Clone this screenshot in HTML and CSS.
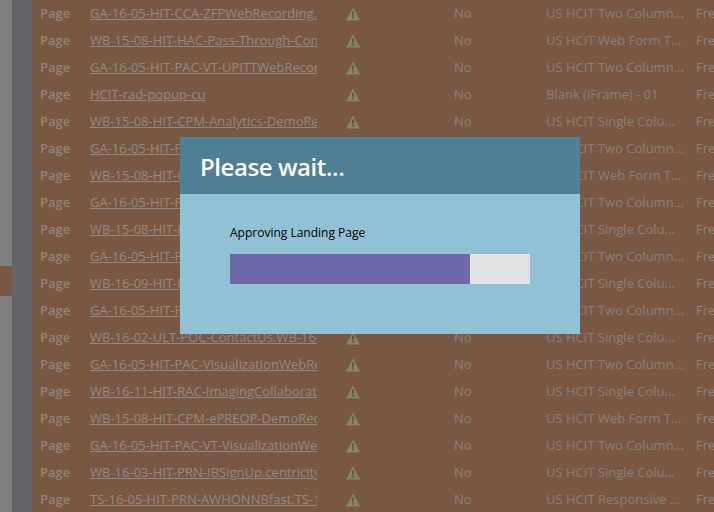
FILE: index.html
```html
<!DOCTYPE html>
<html lang="en">
<head>
<meta charset="utf-8">
<title>Please wait</title>
<link rel="stylesheet" href="styles.css">
</head>
<body>
<svg class="defs" width="0" height="0" aria-hidden="true">
  <symbol id="warn" viewBox="0 0 14 14">
    <path d="M7 .5 14 13.5H0Z" fill="#85865b"/>
    <path d="M6.2 4.4h1.6l-.2 5H6.4Z" fill="#4f4a3a"/>
    <rect x="6.3" y="10.2" width="1.4" height="1.5" fill="#4f4a3a"/>
  </symbol>
</svg>
<div class="app">
  <aside class="tree">
    <div class="tree-selected"></div>
  </aside>
  <div class="divider"></div>
  <main class="table">
    <div class="row"><span class="type">Page</span><a class="name">GA-16-05-HIT-CCA-ZFPWebRecording.com</a><svg class="icon"><use href="#warn"/></svg><span class="flag">No</span><span class="tpl">US HCIT Two Column...</span><span class="last">Free</span></div>
    <div class="row"><span class="type">Page</span><a class="name">WB-15-08-HIT-HAC-Pass-Through-ContactUs</a><svg class="icon"><use href="#warn"/></svg><span class="flag">No</span><span class="tpl">US HCIT Web Form T...</span><span class="last">Free</span></div>
    <div class="row"><span class="type">Page</span><a class="name">GA-16-05-HIT-PAC-VT-UPITTWebRecording</a><svg class="icon"><use href="#warn"/></svg><span class="flag">No</span><span class="tpl">US HCIT Two Column...</span><span class="last">Free</span></div>
    <div class="row"><span class="type">Page</span><a class="name">HCIT-rad-popup-cu</a><svg class="icon"><use href="#warn"/></svg><span class="flag">No</span><span class="tpl">Blank (iFrame) - 01</span><span class="last">Free</span></div>
    <div class="row"><span class="type">Page</span><a class="name">WB-15-08-HIT-CPM-Analytics-DemoRequest</a><svg class="icon"><use href="#warn"/></svg><span class="flag">No</span><span class="tpl">US HCIT Single Colu...</span><span class="last">Free</span></div>
    <div class="row"><span class="type">Page</span><a class="name">GA-16-05-HIT-PAC-WebRecording</a><svg class="icon"><use href="#warn"/></svg><span class="flag">No</span><span class="tpl">US HCIT Two Column...</span><span class="last">Free</span></div>
    <div class="row"><span class="type">Page</span><a class="name">WB-15-08-HIT-CPM-ContactUs</a><svg class="icon"><use href="#warn"/></svg><span class="flag">No</span><span class="tpl">US HCIT Web Form T...</span><span class="last">Free</span></div>
    <div class="row"><span class="type">Page</span><a class="name">GA-16-05-HIT-PAC-WebRecording</a><svg class="icon"><use href="#warn"/></svg><span class="flag">No</span><span class="tpl">US HCIT Two Column...</span><span class="last">Free</span></div>
    <div class="row"><span class="type">Page</span><a class="name">WB-15-08-HIT-RAC-DemoRequest</a><svg class="icon"><use href="#warn"/></svg><span class="flag">No</span><span class="tpl">US HCIT Single Colu...</span><span class="last">Free</span></div>
    <div class="row"><span class="type">Page</span><a class="name">GA-16-05-HIT-PAC-WebRecording</a><svg class="icon"><use href="#warn"/></svg><span class="flag">No</span><span class="tpl">US HCIT Two Column...</span><span class="last">Free</span></div>
    <div class="row"><span class="type">Page</span><a class="name">WB-16-09-HIT-RAC-ContactUs</a><svg class="icon"><use href="#warn"/></svg><span class="flag">No</span><span class="tpl">US HCIT Single Colu...</span><span class="last">Free</span></div>
    <div class="row"><span class="type">Page</span><a class="name">GA-16-05-HIT-PAC-WebRecording</a><svg class="icon"><use href="#warn"/></svg><span class="flag">No</span><span class="tpl">US HCIT Two Column...</span><span class="last">Free</span></div>
    <div class="row"><span class="type">Page</span><a class="name">WB-16-02-ULT-POC-ContactUs.WB-16-02</a><svg class="icon"><use href="#warn"/></svg><span class="flag">No</span><span class="tpl">US HCIT Single Colu...</span><span class="last">Free</span></div>
    <div class="row"><span class="type">Page</span><a class="name">GA-16-05-HIT-PAC-VisualizationWebRecording</a><svg class="icon"><use href="#warn"/></svg><span class="flag">No</span><span class="tpl">US HCIT Two Column...</span><span class="last">Free</span></div>
    <div class="row"><span class="type">Page</span><a class="name">WB-16-11-HIT-RAC-ImagingCollaboration</a><svg class="icon"><use href="#warn"/></svg><span class="flag">No</span><span class="tpl">US HCIT Single Colu...</span><span class="last">Free</span></div>
    <div class="row"><span class="type">Page</span><a class="name">WB-15-08-HIT-CPM-ePREOP-DemoRequest</a><svg class="icon"><use href="#warn"/></svg><span class="flag">No</span><span class="tpl">US HCIT Web Form T...</span><span class="last">Free</span></div>
    <div class="row"><span class="type">Page</span><a class="name">GA-16-05-HIT-PAC-VT-VisualizationWebRecording</a><svg class="icon"><use href="#warn"/></svg><span class="flag">No</span><span class="tpl">US HCIT Two Column...</span><span class="last">Free</span></div>
    <div class="row"><span class="type">Page</span><a class="name">WB-16-03-HIT-PRN-IBSignUp.centricity.com</a><svg class="icon"><use href="#warn"/></svg><span class="flag">No</span><span class="tpl">US HCIT Single Colu...</span><span class="last">Free</span></div>
    <div class="row"><span class="type">Page</span><a class="name">TS-16-05-HIT-PRN-AWHONNBfast.TS-16-05</a><svg class="icon"><use href="#warn"/></svg><span class="flag">No</span><span class="tpl">US HCIT Responsive ...</span><span class="last">Free</span></div>
  </main>
</div>
<section class="dialog">
  <header class="dialog-head">Please wait...</header>
  <div class="dialog-body">
    <p class="dialog-label">Approving Landing Page</p>
    <div class="progress"><div class="progress-fill"></div></div>
  </div>
</section>
</body>
</html>
```
FILE: styles.css
```css
html, body {
  margin: 0;
  width: 714px;
  height: 512px;
  overflow: hidden;
  background: #795843;
  font-family: "Open Sans", "Liberation Sans", sans-serif;
}

.defs {
  display: block;
  height: 0;
}

.app {
  display: flex;
  height: 512px;
}

.tree {
  width: 12px;
  flex: none;
  background: #7f7f80;
  padding-top: 266px;
  box-sizing: border-box;
}

.tree-selected {
  height: 30px;
  background: #795843;
}

.divider {
  width: 20px;
  flex: none;
  background: #646367;
}

.table {
  flex: 1;
  min-width: 0;
  background: #795843;
  color: #8a7c73;
  font-size: 13px;
  line-height: 27px;
}

.row {
  display: flex;
  align-items: center;
  height: 27px;
  white-space: nowrap;
}

.type {
  width: 50px;
  flex: none;
  margin-left: 8px;
  font-weight: 600;
  color: #8f8379;
}

.name {
  width: 227px;
  flex: none;
  overflow: hidden;
  color: #8f8785;
  text-decoration: underline;
}

.icon {
  width: 14px;
  height: 14px;
  flex: none;
  margin-left: 29px;
}

.flag {
  width: 92px;
  flex: none;
  margin-left: 94px;
  color: #8c7f78;
}

.tpl {
  width: 150px;
  flex: none;
  color: #867d7a;
}

.last {
  flex: none;
  color: #8c7f78;
}

.dialog {
  position: absolute;
  left: 180px;
  top: 137px;
  width: 400px;
  height: 197px;
  background: #91c1d4;
}

.dialog-head {
  height: 57px;
  box-sizing: border-box;
  padding-left: 20px;
  background: #4f7f94;
  color: #fff;
  font-size: 24px;
  font-weight: 600;
  letter-spacing: -0.43px;
  line-height: 60px;
}

.dialog-body {
  padding: 30px 50px 0;
}

.dialog-label {
  margin: 0;
  color: #000;
  font-size: 12px;
  line-height: 18px;
}

.progress {
  margin-top: 12px;
  height: 30px;
  background: #e2e2e2;
}

.progress-fill {
  width: 240px;
  height: 30px;
  background: #6f69a9;
}
```
